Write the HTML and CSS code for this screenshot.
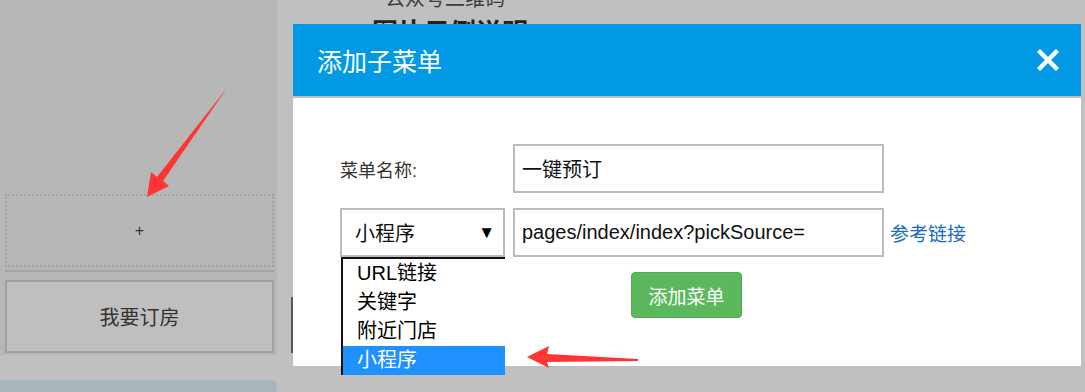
FILE: index.html
```html
<!DOCTYPE html>
<html lang="zh-CN">
<head>
    <meta charset="UTF-8">
    <meta name="viewport" content="width=device-width, initial-scale=1.0">
    <title>添加子菜单</title>
    <link rel="stylesheet" href="styles.css">
</head>
<body>
    <div class="page">
        <div class="left-col">
            <div class="sidebar">
                <div class="add-box">+</div>
                <div class="divider"></div>
                <div class="menu-btn">我要订房</div>
            </div>
            <div class="save-box"></div>
        </div>
        <div class="main">
            <div class="qr-title">公众号二维码</div>
            <div class="qr-sub">图片示例说明</div>
            <div class="phone-edge"></div>
        </div>
    </div>

    <div class="modal">
        <div class="modal-header">
            <span class="modal-title">添加子菜单</span>
            <svg class="close" width="22" height="22" viewBox="0 0 22 22">
                <path d="M3 3 L19 19 M19 3 L3 19" stroke="#fff" stroke-width="4.4" stroke-linecap="square" fill="none"/>
            </svg>
        </div>
        <div class="modal-body">
            <div class="form-row">
                <label class="form-label">菜单名称:</label>
                <div class="text-input">一键预订</div>
            </div>
            <div class="form-row row-gap">
                <div class="select-wrap">
                    <div class="select">
                        <span>小程序</span>
                        <span class="caret">▼</span>
                    </div>
                    <ul class="options">
                        <li>URL链接</li>
                        <li>关键字</li>
                        <li>附近门店</li>
                        <li class="active">小程序</li>
                    </ul>
                </div>
                <div class="text-input">pages/index/index?pickSource=</div>
                <a class="ref-link" href="#">参考链接</a>
            </div>
            <div class="form-row row-gap">
                <button class="btn-add">添加菜单</button>
            </div>
        </div>
    </div>

    <svg class="arrows" width="1085" height="392" viewBox="0 0 1085 392">
        <polygon points="227,88 163,181 169,186 147,197 151,172 157,177" fill="#ff3434"/>
        <polygon points="527,357 549,346 547,354 638,359 638,361 547,362 549,368" fill="#ff3434"/>
    </svg>
</body>
</html>
```

FILE: styles.css
```css
body {
    margin: 0;
    width: 1085px;
    height: 392px;
    overflow: hidden;
    background-color: #c0c0c0;
    font-family: "Liberation Sans", "Noto Sans CJK SC", sans-serif;
    position: relative;
}
.page {
    display: flex;
    align-items: flex-start;
}
.left-col {
    width: 277px;
}
.sidebar {
    background-color: #b7b7b7;
    padding: 194px 3px 2px 5px;
}
.add-box {
    height: 69px;
    border: 2px dotted #a3a3a3;
    display: flex;
    align-items: center;
    justify-content: center;
    font-size: 16px;
    color: #333;
}
.divider {
    height: 2px;
    margin-top: 3px;
    background-color: #a3a3a3;
}
.menu-btn {
    height: 69px;
    margin-top: 8px;
    border: 2px solid #a0a0a0;
    background-color: #bfbfbf;
    display: flex;
    align-items: center;
    justify-content: center;
    font-size: 20px;
    color: #333;
}
.save-box {
    margin-top: 25px;
    height: 20px;
    background-color: #a8b5ba;
    border: 1px solid #9ebdc5;
    border-radius: 0 5px 0 0;
}
.main {
    margin-top: -12px;
    display: flex;
    flex-direction: column;
}
.qr-title {
    margin-left: 108px;
    font-size: 20px;
    line-height: 22px;
    color: #3c3c3c;
}
.qr-sub {
    margin-top: 7px;
    margin-left: 95px;
    font-size: 26px;
    font-weight: bold;
    line-height: 32px;
    color: #222;
}
.phone-edge {
    margin-top: 248px;
    margin-left: 14px;
    width: 2px;
    height: 56px;
    background-color: #5a5a5a;
}

.modal {
    position: absolute;
    left: 293px;
    top: 24px;
    width: 788px;
    height: 342px;
    background-color: #fff;
}
.modal-header {
    height: 72px;
    background-color: #0299e5;
    border-bottom: 2px solid #c0c0c0;
    display: flex;
    align-items: center;
    justify-content: space-between;
    padding: 0 22px 0 24px;
}
.modal-title {
    color: #fff;
    font-size: 25px;
}
.modal-body {
    padding: 46px 0 0 47px;
}
.form-row {
    display: flex;
    align-items: center;
}
.row-gap {
    margin-top: 15px;
}
.form-label {
    width: 173px;
    font-size: 18px;
    color: #333;
}
.text-input {
    box-sizing: border-box;
    width: 371px;
    height: 49px;
    border: 2px solid #bbb;
    padding-left: 7px;
    display: flex;
    align-items: center;
    font-size: 20px;
    color: #111;
}
.select-wrap {
    position: relative;
    margin-right: 8px;
}
.select {
    box-sizing: border-box;
    width: 165px;
    height: 49px;
    border: 2px solid #bbb;
    padding: 0 8px 0 13px;
    display: flex;
    align-items: center;
    justify-content: space-between;
    font-size: 20px;
    color: #111;
}
.caret {
    font-size: 17px;
    color: #000;
}
.options {
    position: absolute;
    left: 1px;
    top: 49px;
    width: 164px;
    box-sizing: border-box;
    margin: 0;
    padding: 0;
    list-style: none;
    background-color: #fff;
    border-top: 2px solid #111;
    border-left: 2px solid #111;
    z-index: 2;
}
.options li {
    height: 29px;
    line-height: 29px;
    padding-left: 14px;
    font-size: 20px;
    color: #000;
}
.options li.active {
    background-color: #1e90ff;
    color: #fff;
}
.ref-link {
    margin-left: 6px;
    font-size: 19px;
    color: #1a6dbf;
    text-decoration: none;
}
.btn-add {
    margin-left: 291px;
    width: 111px;
    height: 46px;
    background-color: #5cb85c;
    border: 1px solid #4cae4c;
    border-radius: 4px;
    color: #fff;
    font-family: inherit;
    font-size: 19px;
}
.arrows {
    position: absolute;
    left: 0;
    top: 0;
    pointer-events: none;
    z-index: 5;
}
```
